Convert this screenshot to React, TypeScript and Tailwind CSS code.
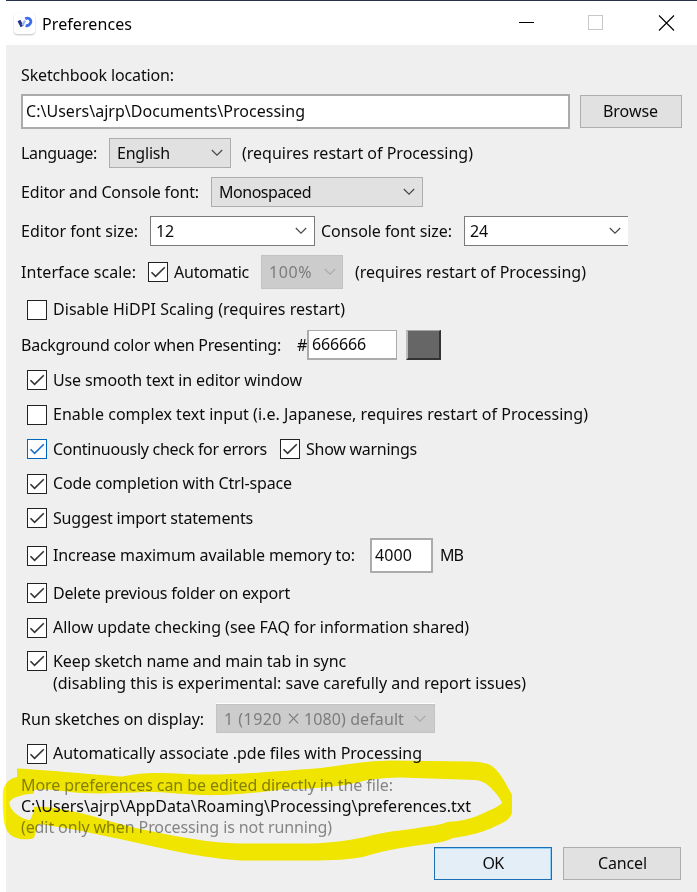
import { useLayoutEffect, useRef, useState } from "react";
import type { ReactNode } from "react";

// Text that is tracked so that, with its one-pixel side bearing, it fills `w` pixels.
function T({ w, children, className = "" }: { w: number; children: string; className?: string }) {
  const ref = useRef<HTMLSpanElement>(null);
  const [spacing, setSpacing] = useState(0);
  useLayoutEffect(() => {
    const el = ref.current;
    if (!el) return;
    const natural = el.getBoundingClientRect().width - spacing * children.length;
    setSpacing((w - 1 - natural) / children.length);
  }, [w, children]);
  return (
    <span ref={ref} className={"mr-px shrink-0 whitespace-pre " + className} style={{ letterSpacing: spacing }}>
      {children}
    </span>
  );
}

function Check({ on = true, blue = false, className = "" }: { on?: boolean; blue?: boolean; className?: string }) {
  return (
    <span
      className={
        "size-5 shrink-0 border bg-white " +
        (blue ? "border-[#0067c0] text-[#1a72c4] " : "border-[#222222] text-[#333333] ") +
        className
      }
    >
      {on && (
        <svg viewBox="0 0 18 18" className="size-[18px]" fill="none" stroke="currentColor" strokeWidth="1.6">
          <path d="M2.5 9.2 L6.6 13.4 L15.8 4.2" />
        </svg>
      )}
    </span>
  );
}

function Chevron({ className = "" }: { className?: string }) {
  return (
    <svg viewBox="0 0 12 8" className={"h-2 w-3 shrink-0 " + className} fill="none" stroke="currentColor" strokeWidth="1.1">
      <path d="M0.8 1 L6 6.2 L11.2 1" />
    </svg>
  );
}

function Row({ className, children }: { className: string; children: ReactNode }) {
  return <div className={"flex shrink-0 items-center " + className}>{children}</div>;
}

export default function App() {
  return (
    <div className="relative flex h-[892px] w-[697px] flex-col overflow-hidden bg-white pl-1.5 font-['Noto_Sans',sans-serif] text-[16px] leading-[21px] text-[#0c0c0c]">
      <header className="flex h-[45px] shrink-0 items-center border-t border-[#27304f] pl-2">
        <span className="flex size-[21px] items-center justify-center rounded-[4px] bg-white shadow-[0_1px_2px_rgba(0,0,0,0.25)]">
          <svg viewBox="0 0 16 16" className="size-4" fill="none">
            <path d="M2 5.5 L5 11.5" stroke="#27348f" strokeWidth="3.2" />
            <path d="M5.5 10.5 L8 5.5" stroke="#9db4f2" strokeWidth="2.2" />
            <path d="M8.2 3.8 C12.5 1.6 15.2 6 13 8.8 C12 10.4 10.2 11 8.6 10.6" stroke="#3a6cec" strokeWidth="2.8" />
          </svg>
        </span>
        <T w={91} className="relative top-px ml-[7px] text-black">Preferences</T>
        <svg viewBox="0 0 158 16" className="ml-[386px] h-4 w-[158px]" fill="none" shapeRendering="crispEdges">
          <path d="M0 7.5 H15" stroke="#000" />
          <rect x="69.5" y="0.5" width="14" height="14" stroke="#c8c8c8" />
          <path d="M140 0.5 L155 15.5 M155 0.5 L140 15.5" stroke="#000" shapeRendering="auto" strokeWidth="1.1" />
        </svg>
      </header>

      <main className="flex flex-1 flex-col bg-[#efefef] pt-[11px] pl-[15px]">
        <Row className="h-[38px]"><T w={154}>Sketchbook location:</T></Row>
        <Row className="h-[35px]">
          <div className="flex h-[35px] w-[549px] items-center border-2 border-[#ababab] bg-white pl-[3px]">
            <T w={280}>{"C:\\Users\\ajrp\\Documents\\Processing"}</T>
          </div>
          <div className="ml-2.5 flex h-[33px] w-[102px] items-center justify-center border border-[#adadad] bg-[#e1e1e1]">
            <T w={56} className="mr-0">Browse</T>
          </div>
        </Row>
        <Row className="h-12">
          <T w={77}>Language:</T>
          <div className="ml-[11px] flex h-[30px] w-[122px] items-center justify-between border border-[#adadad] bg-[#e1e1e1] pr-[7px] pl-[7px]">
            <T w={54}>English</T>
            <Chevron className="text-[#444444]" />
          </div>
          <T w={232} className="ml-[11px]">(requires restart of Processing)</T>
        </Row>
        <Row className="h-[30px]">
          <T w={179}>Editor and Console font:</T>
          <div className="ml-[11px] flex h-[30px] w-[212px] items-center justify-between border border-[#adadad] bg-[#e1e1e1] pr-[7px] pl-[7px]">
            <T w={93}>Monospaced</T>
            <Chevron className="text-[#444444]" />
          </div>
        </Row>
        <Row className="h-12">
          <T w={118}>Editor font size:</T>
          <div className="ml-[11px] flex h-[30px] w-[165px] items-center justify-between border border-[#7a7a7a] bg-white pr-[7px] pl-[5px]">
            <T w={19}>12</T>
            <Chevron className="text-[#444444]" />
          </div>
          <T w={132} className="ml-1.5">Console font size:</T>
          <div className="ml-[11px] flex h-[30px] w-[164px] items-center justify-between border border-r-0 border-[#7a7a7a] bg-white pr-[7px] pl-[5px]">
            <T w={19}>24</T>
            <Chevron className="text-[#444444]" />
          </div>
        </Row>
        <Row className="h-[34px]">
          <T w={116}>Interface scale:</T>
          <Check className="ml-[11px]" />
          <T w={76} className="ml-1.5">Automatic</T>
          <div className="ml-[11px] flex h-[34px] w-[82px] items-center justify-between border border-[#c3c3c3] bg-[#cccccc] pr-[6px] pl-[7px] text-[#7c7c7c]">
            <T w={44}>100%</T>
            <Chevron className="text-[#aaaaaa]" />
          </div>
          <T w={232} className="ml-3">(requires restart of Processing)</T>
        </Row>
        <Row className="h-[41px] gap-1.5 pl-1.5"><Check on={false} /><T w={293}>Disable HiDPI Scaling (requires restart)</T></Row>
        <Row className="mt-px h-7">
          <T w={261}>Background color when Presenting:</T>
          <T w={10} className="ml-[15px]">#</T>
          <div className="flex h-[30px] w-[90px] items-center border border-b-2 border-l-2 border-[#ababab] bg-white pl-[3px]">
            <T w={55}>666666</T>
          </div>
          <div className="ml-[9px] h-[30px] w-[35px] border-t border-r-2 border-b-2 border-l-2 border-t-[#a5a5a5] border-r-[#333333] border-b-[#333333] border-l-[#bcbcbc] bg-[#666666]" />
        </Row>
        <Row className="h-[42px] gap-1.5 pl-1.5"><Check /><T w={250}>Use smooth text in editor window</T></Row>
        <Row className="h-7 gap-1.5 pl-1.5"><Check on={false} /><T w={536} className="-mt-px">Enable complex text input (i.e. Japanese, requires restart of Processing)</T></Row>
        <Row className="h-10 gap-1.5 pl-1.5">
          <Check blue />
          <T w={215}>Continuously check for errors</T>
          <Check className="ml-[6px]" />
          <T w={112}>Show warnings</T>
        </Row>
        <Row className="h-[30px] gap-1.5 pl-1.5"><Check /><T w={240} className="-mt-px">Code completion with Ctrl-space</T></Row>
        <Row className="h-[38px] gap-1.5 pl-1.5"><Check /><T w={201}>Suggest import statements</T></Row>
        <Row className="h-[38px] gap-1.5 pl-1.5">
          <Check />
          <T w={303} className="-mt-px">Increase maximum available memory to:</T>
          <div className="-mt-px ml-2 flex h-[35px] w-[63px] items-center border-2 border-[#ababab] bg-white pl-[3px]">
            <T w={38}>4000</T>
          </div>
          <T w={24} className="-mt-px ml-px">MB</T>
        </Row>
        <Row className="h-9 gap-1.5 pl-1.5"><Check /><T w={238}>Delete previous folder on export</T></Row>
        <Row className="h-[34px] gap-1.5 pl-1.5"><Check /><T w={417} className="-mt-px">Allow update checking (see FAQ for information shared)</T></Row>
        <Row className="h-8 gap-1.5 pl-1.5"><Check /><T w={294}>Keep sketch name and main tab in sync</T></Row>
        <Row className="h-3.5 pl-8"><T w={474} className="-mt-px">(disabling this is experimental: save carefully and report issues)</T></Row>
        <Row className="h-[55px]">
          <T w={184} className="mt-px">Run sketches on display:</T>
          <div className="ml-[11px] flex h-[29px] w-[219px] items-center border border-[#c3c3c3] bg-[#cccccc] pl-[7px] text-[#7c7c7c] shadow-[0_-1px_0_#ffffff]">
            <T w={59} className="mt-px">1 (1920</T>
            <span className="flex w-[21px] justify-center text-[23px] leading-[21px] font-light">×</span>
            <T w={101} className="mt-px">1080) default</T>
            <Chevron className="ml-[9px] text-[#aaaaaa]" />
          </div>
        </Row>
        <Row className="h-4 gap-1.5 pl-1.5"><Check /><T w={370} className="-mt-px">Automatically associate .pde files with Processing</T></Row>
        <Row className="mt-[13px] h-[21px] text-[#858585]"><T w={373}>More preferences can be edited directly in the file:</T></Row>
        <Row className="h-[21px]"><T w={451}>{"C:\\Users\\ajrp\\AppData\\Roaming\\Processing\\preferences.txt"}</T></Row>
        <Row className="h-[21px] text-[#858585]"><T w={312}>(edit only when Processing is not running)</T></Row>
        <Row className="mt-[9px] h-[33px] gap-[11px] pl-[413px]">
          <div className="flex h-[33px] w-[118px] items-center justify-center border border-[#1a6fb5] bg-[#e3eef7] pl-px shadow-[inset_-1px_1px_0_#8fd0fb]">
            <T w={22} className="mr-0">OK</T>
          </div>
          <div className="flex h-[33px] w-[118px] items-center justify-center border border-[#adadad] bg-[#e1e1e1] pl-0.5">
            <T w={50} className="mr-0">Cancel</T>
          </div>
        </Row>
      </main>

      {/* Highlighter stroke round the preferences path */}
      <svg viewBox="0 0 697 892" className="pointer-events-none absolute top-0 left-0 h-[892px] w-[697px] mix-blend-multiply">
        <path
          fill="#fff500"
          fillRule="evenodd"
          d="M17 768.5 C50 770 95 775 122 776.5 C135 774 145 773 155 773 C175 773 180 774 200 774.5 C230 775 270 772 300 769.5 C335 768 355 761 390 760.5 L470 761.5 Q486 762 492 766 C500 772 505 782 512 795 V813 Q510 820 500 824 C490 829 480 834 453 838 Q445 842 435 843 C410 846 385 850 363 857 C345 860 330 860.5 300 860.5 H240 C195 858 150 845 100 835 C75 829 60 827 38 824 L34 838 Q30 840 20 839 Q8 837 5 826 Q2 815 3 790 Q6 779 17 777 Z M34 793.5 L34 790 C50 788 65 792 83 793 C100 794 115 793 135 792.5 C160 791 175 794 200 795 C235 796 270 791 285 789 C310 789 335 787 355 783 C370 779 380 778 400 777.5 L475 780 Q484 781 490 787 Q500 797 502 803 Q498 807 488 811 C470 820 460 821 447 822 Q440 825 430 826 C410 830 390 830 365 837 C345 841 330 843 310 843.5 H240 C210 843 180 837 150 831 C120 826 90 813 60 809 Q45 806 34 807 Q34 813 30 820 C20 819 9 810 9.5 802 Q14 795 34 793.5 Z"
        />
      </svg>
    </div>
  );
}
